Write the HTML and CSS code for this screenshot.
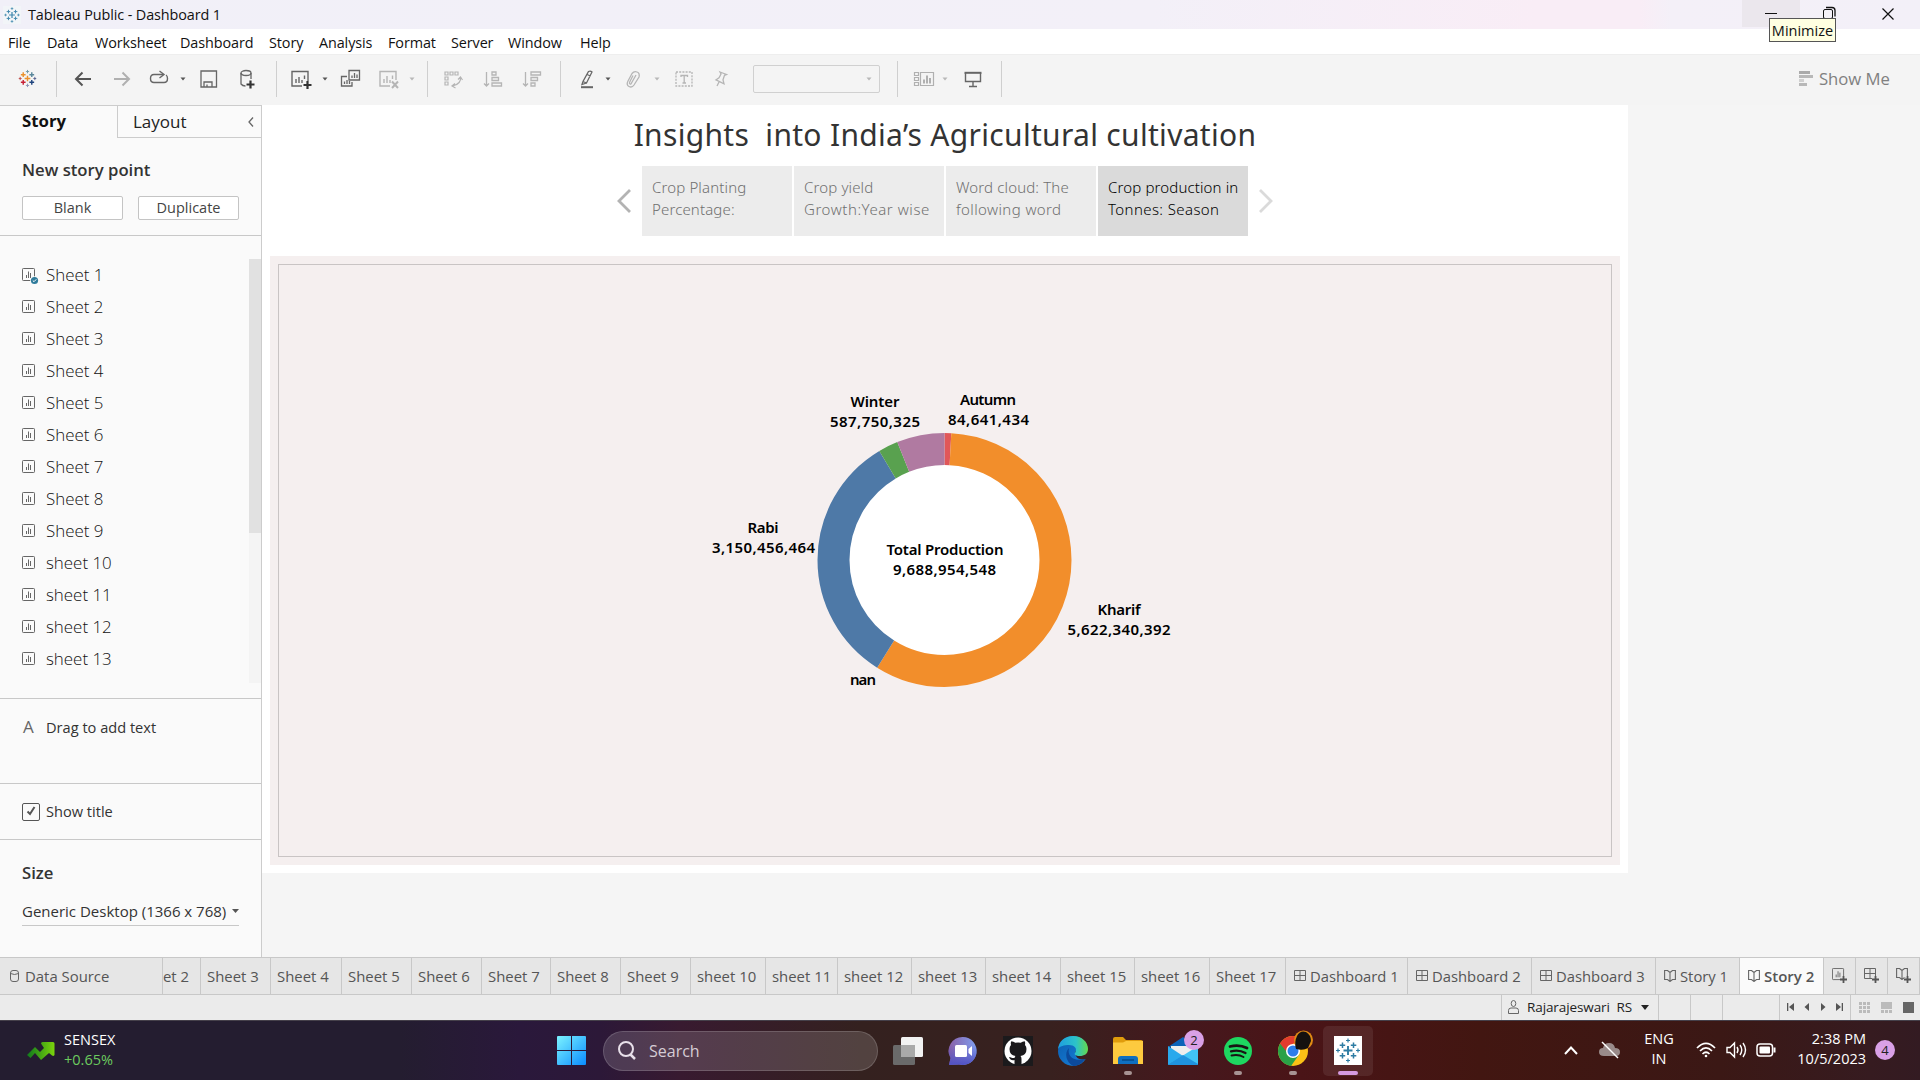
FILE: index.html
```html
<!DOCTYPE html>
<html lang="en">
<head>
<meta charset="utf-8">
<title>Tableau Public - Dashboard 1</title>
<link rel="stylesheet" href="styles.css">
</head>
<body>
<svg width="0" height="0" class="defs">
  <defs>
    <symbol id="sheet" viewBox="0 0 14 14"><rect x=".5" y=".5" width="12" height="12" rx=".8" fill="none" stroke="#666"/><path d="M4.500 10V7M6.500 10V3.500M8.500 10V5" stroke="#666"/></symbol>
    <symbol id="caret" viewBox="0 0 20 20"><path d="M7.500 8.500h5l-2.500 3z" fill="currentColor"/></symbol>
    <symbol id="sep" viewBox="0 0 20 36"><path d="M10.500 0v36" stroke="#cfcfcf"/></symbol>
    <symbol id="dash" viewBox="0 0 12 12"><path d="M.5 .5h11v10h-11zM6 .5v10M.5 5.500h11" fill="none" stroke="#666"/></symbol>
    <symbol id="book" viewBox="0 0 12 12"><path d="M.6 .5L3.500 .5 6 2.500 8.500 .5l2.900 0V9.500L8.500 9.500 6 11.500 3.500 9.500 .6 9.500zM6 2.500v9" fill="none" stroke="#666" stroke-width="1.100"/></symbol>
    <symbol id="tableau" viewBox="0 0 28 28">
      <g stroke-width="1.500" fill="none">
        <path d="M14 9.500v9M9.500 14h9" stroke-width="1.900"/><path d="M8.500 6v5.500M5.700 8.700h5.500M19.500 6v5.500M16.800 8.700h5.500M8.500 16.500V22M5.700 19.300h5.500M19.500 16.500V22M16.800 19.300h5.500"/>
        <path d="M14 2v4M12 4h4M14 22v4M12 24h4M4 12v4M2 14h4M24 12v4M22 14h4" stroke-width="1.200"/>
      </g>
    </symbol>
  </defs>
</svg>

<header class="titlebar">
  <svg class="app-icon" width="18" height="18" viewBox="0 0 28 28"><rect width="28" height="28" fill="#f2f5f8"/><use href="#tableau" stroke="#3f87ad" width="28" height="28"/></svg>
  <span class="app-name">Tableau Public - Dashboard 1</span>
  <div class="win-buttons">
    <span class="win-btn hover"><svg width="12" height="12"><path d="M0 5.500h12" stroke="#111"/></svg></span>
    <span class="win-btn"><svg width="13" height="13" fill="none" stroke="#111"><rect x=".5" y="2.500" width="9" height="9" rx="1.500"/><path d="M3 .5h6q3 0 3 3v6" stroke-width="1.300"/></svg></span>
    <span class="win-btn close"><svg width="12" height="12"><path d="M.5 .5l11 11M11.500 .5l-11 11" stroke="#111" stroke-width="1.200"/></svg></span>
  </div>
  <div class="tooltip">Minimize</div>
</header>

<nav class="menubar"><span>File</span><span>Data</span><span>Worksheet</span><span>Dashboard</span><span>Story</span><span>Analysis</span><span>Format</span><span>Server</span><span>Window</span><span>Help</span></nav>

<div class="toolbar">
  <svg class="ic logo" viewBox="0 0 20 20" stroke-width="1.500"><path d="M10 7v6M7 10h6" stroke="#eb912c"/><path d="M5.500 3.500v5M3 6h5" stroke="#eb912c"/><path d="M14.500 3.500v5M12 6h5" stroke="#59879b"/><path d="M5.500 11.500v5M3 14h5" stroke="#c72035"/><path d="M14.500 11.500v5M12 14h5" stroke="#1f447e"/><path d="M10 1v3.500M8.300 2.700h3.400" stroke="#7199a6" stroke-width="1"/><path d="M10 15.500V19M8.300 17.300h3.400" stroke="#8a93b5" stroke-width="1"/><path d="M2.300 8.300v3.400M.8 10h3" stroke="#c0504d" stroke-width="1"/><path d="M17.700 8.300v3.400M16.200 10h3" stroke="#5b6591" stroke-width="1"/></svg>
  <svg class="sep"><use href="#sep"/></svg>
  <svg class="ic" fill="none" stroke="#555" stroke-width="2"><path d="M18 10H3M9.500 3.500L3 10l6.500 6.500"/></svg>
  <svg class="ic" fill="none" stroke="#b0b0b0" stroke-width="2"><path d="M2 10h15M10.500 3.500L17 10l-6.500 6.500"/></svg>
  <svg class="ic" fill="none" stroke="#666" stroke-width="1.400"><path d="M14 5.500H5q-3.500 0-3.500 4t3.500 4h10q3.500 0 3.500-4 0-2.500-1.500-3.500"/><path d="M10.500 2l4.500 3.500-4.500 3.500" /></svg>
  <svg class="ic dark"><use href="#caret"/></svg>
  <svg class="ic" fill="none" stroke="#666" stroke-width="1.300"><path d="M2 2h15.500v16H2zM5 18v-5h8v5M8 18v-2.500"/></svg>
  <svg class="ic" fill="none" stroke="#666" stroke-width="1.300"><ellipse cx="9" cy="4" rx="5" ry="2.500"/><path d="M4 4v11q1.500 2 4.500 2M14 4v6"/><path d="M13.500 11.500v8M9.500 15.500h8" stroke="#333" stroke-width="2.200"/></svg>
  <svg class="sep"><use href="#sep"/></svg>
  <svg class="ic" fill="none" stroke="#666" stroke-width="1.400"><path d="M12 17H2V2.500h16V12M6 14v-4M9 14V8M12 14v-3M14.500 10V6.500"/><path d="M17.500 12v8M13.500 16h8" stroke="#333" stroke-width="2.200"/></svg>
  <svg class="ic dark"><use href="#caret"/></svg>
  <svg class="ic" fill="none" stroke="#666" stroke-width="1.300"><path d="M9 1.500h10.500v9.500H9zM12 9V6.500M14.500 9V4M17 9V5.500M7 7.500H1.500V17H12v-4M4.500 15v-2.500M7 15v-4M9.500 15v-3"/></svg>
  <svg class="ic" fill="none" stroke="#b5b5b5" stroke-width="1.400"><path d="M12 17H2V2.500h16V11M6 14v-4M9 14V7M12 14v-3M14.500 10V6.500"/><path d="M14 12.500l6 6.500M20 12.500L14 19" stroke-width="2"/></svg>
  <svg class="ic light"><use href="#caret"/></svg>
  <svg class="sep"><use href="#sep"/></svg>
  <svg class="ic" fill="none" stroke="#b5b5b5" stroke-width="1.200"><path d="M2 3h3v3H2zM7 3h3v3H7zM12 3h3v3h-3zM2 8h3v3H2zM2 13h3v3H2zM17.500 8q1 7-8 9M15 10.500L17.500 8l2 3M12 14.500L9 17l3.500 2"/></svg>
  <svg class="ic" fill="none" stroke="#b5b5b5" stroke-width="1.300"><path d="M3.500 3v14M1 14.500L3.500 17 6 14.500M9 3h4v3H9zM9 8.500h6.500v3H9zM9 14h9.500v3H9z"/></svg>
  <svg class="ic" fill="none" stroke="#b5b5b5" stroke-width="1.300"><path d="M3.500 3v14M1 14.500L3.500 17 6 14.500M9 3h9.500v3H9zM9 8.500h6.500v3H9zM9 14h4v3H9z"/></svg>
  <svg class="sep"><use href="#sep"/></svg>
  <svg class="ic" fill="none" stroke="#666" stroke-width="1.300"><path d="M11.500 2.500q2-1 3.500.5L9.500 14 6 12.500zM10 5.500l3.500 1.500M6 12.500l-1 3 4.500-1.500"/><path d="M4 18.200h12" stroke-width="2"/></svg>
  <svg class="ic dark"><use href="#caret"/></svg>
  <svg class="ic" fill="none" stroke="#b5b5b5" stroke-width="1.300"><path d="M5 12l4-7.500Q11 2 14 3t2 5l-5 8q-2 3-5 1.500T5 12M13 6l-4.500 8q-.5 1.500-1.500 1t-.3-2L10 6.500"/></svg>
  <svg class="ic light"><use href="#caret"/></svg>
  <svg class="ic" fill="none" stroke="#b5b5b5" stroke-width="1.300"><rect x="2" y="3" width="16" height="14" stroke-dasharray="2 1.200"/><path d="M7 8V6.500h6.500V8M10.200 6.500v7.500M8.500 14h3.500"/></svg>
  <svg class="ic" fill="none" stroke="#b5b5b5" stroke-width="1.300"><path d="M9 3l6.500 2.500-2 .8-1.500 4.500 1 4-8-4 3-2L10 5zM8 13l-2 4"/></svg>
  <span class="combo"><svg class="ic light"><use href="#caret"/></svg></span>
  <svg class="sep"><use href="#sep"/></svg>
  <svg class="ic" fill="none" stroke="#b0b0b0" stroke-width="1.200"><path d="M.5 3.500h4v3h-4zM.5 8.500h4v3h-4zM.5 13.500h4v3h-4zM6.500 3.500h13v13h-13z"/><path d="M10 14.500v-4M13 14.500v-8M16 14.500V9" stroke-width="2"/></svg>
  <svg class="ic light"><use href="#caret"/></svg>
  <svg class="ic" fill="none" stroke="#666" stroke-width="1.400"><path d="M2.500 4v8.500h15V4M10 12.500V17M6 17.500h8"/><path d="M1.500 3.800h17" stroke-width="2"/></svg>
  <svg class="sep"><use href="#sep"/></svg>
  <div class="showme"><svg width="14" height="16"><path d="M0 1.500h11" stroke="#aaa" stroke-width="3"/><path d="M0 5.500h14M0 13.500h8" stroke="#b8b8b8" stroke-width="3"/><path d="M0 9.500h5" stroke="#d0d0d0" stroke-width="3"/></svg><span>Show Me</span></div>
</div>

<main class="workspace">
  <aside class="sidebar">
    <div class="side-tabs"><div class="side-tab active">Story</div><div class="side-tab other"><span>Layout</span><svg width="6" height="10" fill="none" stroke="#666" stroke-width="1.300"><path d="M5 .5L1 5l4 4.500"/></svg></div></div>
    <section class="new-point"><h2>New story point</h2><div class="buttons"><span class="button">Blank</span><span class="button">Duplicate</span></div></section>
    <section class="sheets">
      <ul>
        <li><svg class="si" viewBox="0 0 16 14"><use href="#sheet" width="14" height="14"/><circle cx="12.500" cy="12.500" r="4.300" fill="#fafafa"/><circle cx="12.500" cy="12.500" r="3.600" fill="#2f7b9b"/><path d="M10.800 12.500l1.200 1.200 2.300-2.400" fill="none" stroke="#fff"/></svg>Sheet 1</li>
        <li><svg class="si"><use href="#sheet" width="14" height="14"/></svg>Sheet 2</li>
        <li><svg class="si"><use href="#sheet" width="14" height="14"/></svg>Sheet 3</li>
        <li><svg class="si"><use href="#sheet" width="14" height="14"/></svg>Sheet 4</li>
        <li><svg class="si"><use href="#sheet" width="14" height="14"/></svg>Sheet 5</li>
        <li><svg class="si"><use href="#sheet" width="14" height="14"/></svg>Sheet 6</li>
        <li><svg class="si"><use href="#sheet" width="14" height="14"/></svg>Sheet 7</li>
        <li><svg class="si"><use href="#sheet" width="14" height="14"/></svg>Sheet 8</li>
        <li><svg class="si"><use href="#sheet" width="14" height="14"/></svg>Sheet 9</li>
        <li><svg class="si"><use href="#sheet" width="14" height="14"/></svg>sheet 10</li>
        <li><svg class="si"><use href="#sheet" width="14" height="14"/></svg>sheet 11</li>
        <li><svg class="si"><use href="#sheet" width="14" height="14"/></svg>sheet 12</li>
        <li><svg class="si"><use href="#sheet" width="14" height="14"/></svg>sheet 13</li>
      </ul>
      <div class="scroll"><div class="thumb"></div></div>
    </section>
    <section class="drag"><b>A</b><span>Drag to add text</span></section>
    <section class="show-title"><span class="check"><svg width="10" height="10" fill="none" stroke="#555" stroke-width="2"><path d="M1.500 4.500L4 7l4.500-7"/></svg></span><span class="check-label">Show title</span></section>
    <section class="size"><h2>Size</h2><div class="select"><span>Generic Desktop (1366 x 768)</span><svg width="7" height="4"><path d="M0 0h7L3.500 4z" fill="#555"/></svg></div></section>
  </aside>

  <div class="canvas">
    <article class="story">
      <h1>Insights&nbsp; into India’s Agricultural cultivation</h1>
      <div class="points">
        <svg class="arrow" width="14" height="24" fill="none" stroke="#b3b3b3" stroke-width="2.800"><path d="M13 1L2 12l11 11"/></svg>
        <div class="point">Crop Planting<br>Percentage:</div>
        <div class="point">Crop yield<br><span class="widest">Growth:Year wise</span></div>
        <div class="point">Word cloud: The<br><span class="wide">following word</span></div>
        <div class="point current">Crop production in<br><span class="wide">Tonnes: Season</span></div>
        <svg class="arrow" width="14" height="24" fill="none" stroke="#dadada" stroke-width="2.800"><path d="M1 1l11 11L1 23"/></svg>
      </div>
      <div class="dashboard"><div class="frame">
        <svg class="chart" viewBox="695 380 500 330" width="500" height="330">
          <circle cx="944.500" cy="560" r="96" fill="#fff"/>
          <g fill="none" stroke-width="32" transform="rotate(-90 944.5 560)">
            <circle cx="944.500" cy="560" r="111" pathLength="100" stroke="#e15759" stroke-dasharray="0.874 99.126"/>
            <circle cx="944.500" cy="560" r="111" pathLength="100" stroke="#f28e2b" stroke-dasharray="58.028 41.972" stroke-dashoffset="-0.874"/>
            <circle cx="944.500" cy="560" r="111" pathLength="100" stroke="#4e79a7" stroke-dasharray="32.516 67.484" stroke-dashoffset="-58.902"/>
            <circle cx="944.500" cy="560" r="111" pathLength="100" stroke="#59a14f" stroke-dasharray="2.516 97.484" stroke-dashoffset="-91.418"/>
            <circle cx="944.500" cy="560" r="111" pathLength="100" stroke="#b07aa1" stroke-dasharray="6.066 93.934" stroke-dashoffset="-93.934"/>
          </g>
          <g class="labels" text-anchor="middle">
            <text x="875" y="407" textLength="49">Winter</text><text x="875" y="427" textLength="90">587,750,325</text>
            <text x="988" y="405" textLength="56">Autumn</text><text x="988.500" y="425" textLength="81">84,641,434</text>
            <text x="763" y="533" textLength="31">Rabi</text><text x="763.500" y="553" textLength="103">3,150,456,464</text>
            <text x="1119" y="615" textLength="43">Kharif</text><text x="1119" y="635" textLength="103">5,622,340,392</text>
            <text x="863" y="685" textLength="26">nan</text>
            <text x="945" y="555" textLength="117">Total Production</text><text x="944.500" y="575" textLength="103">9,688,954,548</text>
          </g>
        </svg>
      </div></div>
    </article>
  </div>
</main>

<nav class="tabs">
  <span class="tab source"><svg width="9" height="13" fill="none" stroke="#666"><rect x=".5" y=".5" width="8" height="11" rx="2.500"/><path d="M.5 3.500q4 2 8 0"/></svg>Data Source</span>
  <span class="tab cut">et 2</span><span class="tab">Sheet 3</span><span class="tab">Sheet 4</span><span class="tab">Sheet 5</span><span class="tab">Sheet 6</span><span class="tab">Sheet 7</span><span class="tab">Sheet 8</span><span class="tab">Sheet 9</span><span class="tab">sheet 10</span><span class="tab">sheet 11</span><span class="tab">sheet 12</span><span class="tab">sheet 13</span><span class="tab">sheet 14</span><span class="tab">sheet 15</span><span class="tab">sheet 16</span><span class="tab">Sheet 17</span>
  <span class="tab icon"><svg width="12" height="12"><use href="#dash"/></svg>Dashboard 1</span><span class="tab icon"><svg width="12" height="12"><use href="#dash"/></svg>Dashboard 2</span><span class="tab icon"><svg width="12" height="12"><use href="#dash"/></svg>Dashboard 3</span>
  <span class="tab icon"><svg width="12" height="12"><use href="#book"/></svg>Story 1</span><span class="tab icon selected"><svg width="12" height="12"><use href="#book"/></svg>Story 2</span>
  <span class="tab add"><svg width="16" height="16"><use href="#sheet" width="13" height="13"/><path d="M8.500 11.500h7M12 8v7" stroke="#e6e6e6" stroke-width="4"/><path d="M8 11.500h7M11.500 8v7" stroke="#555" stroke-width="1.800"/></svg></span>
  <span class="tab add"><svg width="16" height="16"><use href="#dash" width="12" height="12"/><path d="M8 11.500h7M11.500 8v7" stroke="#e6e6e6" stroke-width="4"/><path d="M8 11.500h7M11.500 8v7" stroke="#555" stroke-width="1.800"/></svg></span>
  <span class="tab add"><svg width="16" height="16"><use href="#book" width="12" height="12"/><path d="M8 11.500h7M11.500 8v7" stroke="#e6e6e6" stroke-width="4"/><path d="M8 11.500h7M11.500 8v7" stroke="#555" stroke-width="1.800"/></svg></span>
</nav>

<div class="status">
  <span></span>
  <span class="user"><svg width="11" height="15" fill="none" stroke="#666"><ellipse cx="5.500" cy="3.500" rx="2.300" ry="3"/><path d="M.5 13.500v-3q0-2.500 2.500-2.500h5q2.500 0 2.500 2.500v3z"/></svg><em>Rajarajeswari&nbsp; RS</em><svg width="8" height="5"><path d="M0 0h8L4 5z" fill="#222"/></svg></span>
  <span></span><span></span><span></span>
  <span class="steps">
    <svg width="8" height="8"><path d="M7 0v8L2 4zM0 0h1.300v8H0z"/></svg><svg width="8" height="8"><path d="M6 0v8L1.500 4z"/></svg><svg width="8" height="8"><path d="M2 0v8l4.500-4z"/></svg><svg width="8" height="8"><path d="M1 0v8l5-4zM6.700 0H8v8H6.700z"/></svg>
  </span>
  <span class="views">
    <svg width="11" height="11" fill="#bbb"><path d="M0 0h3v3H0zM4 0h3v3H4zM8 0h3v3H8zM0 4h3v3H0zM4 4h3v3H4zM8 4h3v3H8zM0 8h3v3H0zM4 8h3v3H4zM8 8h3v3H8z"/></svg>
    <svg width="11" height="11" fill="#bbb"><path d="M0 0h11v7H0zM0 8h3v3H0zM4 8h3v3H4zM8 8h3v3H8z"/></svg>
    <svg width="11" height="11"><path d="M0 0h11v11H0z" fill="#666"/></svg>
  </span>
</div>

<footer class="taskbar">
  <div class="widget"><svg width="28" height="18" viewBox="0 0 28 18"><defs><linearGradient id="gr"><stop offset="0" stop-color="#0f7a1c"/><stop offset="1" stop-color="#7bd40c"/></linearGradient></defs><path d="M0 13L8 5l5 5 4-4-3-4.500q0-1.500 1.500-1.500H26q1.500 0 1.500 1.500V13q-1 1.500-2.500.5L22 11l-8 7-6-7-4.500 5z" fill="url(#gr)"/></svg><p><span>SENSEX</span><span class="up">+0.65%</span></p></div>
  <div class="apps">
    <svg class="win" width="29" height="29"><defs><linearGradient id="wg" x2="1" y2="1"><stop offset="0" stop-color="#7cf3ff"/><stop offset="1" stop-color="#0a8cff"/></linearGradient></defs><path fill="url(#wg)" d="M0 1q0-1 1-1h13v14H0zM15 0h13q1 0 1 1v13H15zM0 15h14v14H1q-1 0-1-1zM15 15h14v13q0 1-1 1H15z"/></svg>
    <div class="search"><svg width="18" height="19" fill="none" stroke="#e8e0ea" stroke-width="2"><circle cx="8" cy="8" r="7"/><path d="M12.500 13.500l4.500 4.500" stroke-width="2.500"/></svg><span>Search</span></div>
    <div class="app"><svg width="30" height="28"><rect x="8" width="22" height="20" rx="1.500" fill="#f2f2f2"/><rect y="8" width="22" height="20" rx="1.500" fill="#6a6a6a"/><path d="M8 8h14v12H8z" fill="#a9a9a9"/></svg></div>
    <div class="app"><svg width="30" height="30"><defs><linearGradient id="tg" x2="1" y2="0"><stop offset="0" stop-color="#8a5fa6"/><stop offset="1" stop-color="#7f9ff0"/></linearGradient><linearGradient id="tg2" x2="0" y2="1"><stop offset=".3" stop-color="#5454c5" stop-opacity="0"/><stop offset="1" stop-color="#4f52c4"/></linearGradient></defs><path d="M15 1a14 14 0 1 1-4 27.500L1 29l1.500-7A14 14 0 0 1 15 1z" fill="url(#tg)"/><path d="M15 1a14 14 0 1 1-4 27.500L1 29l1.500-7A14 14 0 0 1 15 1z" fill="url(#tg2)"/><rect x="7" y="9" width="12" height="12" rx="1.500" fill="#fff"/><path d="M20.500 13l3.500-3v10l-3.500-3z" fill="#fff"/></svg></div>
    <div class="app"><svg width="30" height="30"><rect width="30" height="30" fill="#1b1a1c"/><circle cx="15" cy="15" r="13.500" fill="#fff"/><path d="M11.500 29v-5q-4 1-5.500-3c2 0 2.500 1.500 5.500 1q.3-1.500 1-2-6-.8-6-7 0-2.500 1.500-4-.5-2.500.3-3.800 2.200.2 4 1.600 2.700-.7 5.400 0 1.800-1.400 4-1.600.8 1.300.3 3.800 1.500 1.500 1.500 4 0 6.200-6 7 1 1 1 3V29z" fill="#1b1a1c"/></svg></div>
    <div class="app"><svg width="30" height="30"><defs><linearGradient id="eg"><stop offset="0" stop-color="#1e9de0"/><stop offset=".6" stop-color="#2cc3c9"/><stop offset="1" stop-color="#64d84c"/></linearGradient><linearGradient id="eb" y2="1"><stop offset="0" stop-color="#0b5cae"/><stop offset="1" stop-color="#1782dc"/></linearGradient></defs><circle cx="15" cy="15" r="15" fill="url(#eb)"/><path d="M30 13v9l-2 1c-3 1-8 1-10-3l-1-3 2-5z" fill="#3c1f20"/><path d="M0 13C1 5 7 0 15 0c9 0 15 6 15 13 0 5-4 7-8 7-5 0-6-2-5-3 3-5-1-8-6-8S2 10 0 13z" fill="url(#eg)"/><path d="M11 12c-2 8 4 14 16 11-3 4.500-7 7-12 7-7-4-9-13-4-18z" fill="#0c4a9c"/></svg></div>
    <div class="app"><svg width="30" height="28"><path d="M0 2q0-2 2-2h8l3 3h15q2 0 2 2v4H0z" fill="#e09c0c"/><path d="M0 5.500h10l3-1.500h17v23H0z" fill="#fdca3f"/><path d="M5 27v-5q0-3 3-3h14q3 0 3 3v5z" fill="#0f6fc0"/><path d="M9 23h12" stroke="#064a88" stroke-width="1.500"/></svg><i></i></div>
    <div class="app"><svg width="30" height="28"><path d="M0 10L15 0l15 10z" fill="#0b62b8"/><path d="M3 9h24v12H3z" fill="#eee"/><path d="M0 9l15 10L0 28z" fill="#2aa9ec"/><path d="M30 9v19H0z" fill="#41c4f6"/><path d="M30 28V27L15 18 0 28z" fill="#1f93df"/></svg><b class="badge">2</b></div>
    <div class="app"><svg width="30" height="30" fill="none" stroke="#191414" stroke-linecap="round"><circle cx="15" cy="15" r="14" fill="#1ed760" stroke="none"/><path d="M7 10.500q9-2.500 17 1.500" stroke-width="2.800"/><path d="M8 15.300q8-2 14.500 1.700" stroke-width="2.300"/><path d="M8.500 19.500q7-1.500 12 1.500" stroke-width="1.900"/></svg><i></i></div>
    <div class="app"><svg width="30" height="30"><circle cx="15" cy="15" r="15" fill="#fbc116"/><path d="M15 15L2 7.500A15 15 0 0 0 13 29.900L21.500 18z" fill="#2aa147"/><path d="M15 15h-7L2 7.500A15 15 0 0 1 28 7.500H15z" fill="#e33b2e"/><circle cx="15" cy="15" r="7" fill="#fff"/><circle cx="15" cy="15" r="5.500" fill="#2b7de9"/></svg><svg class="avatar" width="19" height="20"><circle cx="9.500" cy="10" r="9.500" fill="#e08a13"/><path d="M2 19Q0 12 3 6t9-4q5 3 5 9l-3 7q-5 3-12 1z" fill="#15110f"/></svg><i></i></div>
    <div class="app active"><svg width="28" height="29"><rect width="28" height="29" fill="#fff"/><use href="#tableau" stroke="#2e7ca3" width="28" height="29"/></svg><i></i></div>
  </div>
  <div class="tray">
    <svg width="14" height="9" fill="none" stroke="#fff" stroke-width="2"><path d="M1 8l6-6.500L13 8"/></svg>
    <svg class="cloud" width="22" height="18"><path d="M5 15q-5 0-5-4t4-4q1-5 6-5 5 0 6 5 5 0 5 4t-4 4z" fill="#998a89"/><path d="M3 1l16 16" stroke="#fff" stroke-width="1.500"/></svg>
    <p class="lang"><span>ENG</span><span>IN</span></p>
    <svg class="wifi" width="20" height="16" fill="none" stroke="#fff" stroke-width="1.700"><path d="M1 6q9-9 18 0M4 9q6-6 12 0M6.500 12q3.500-3.500 7 0"/><circle cx="10" cy="14" r="1.300" fill="#fff" stroke="none"/></svg>
    <svg class="sound" width="21" height="16" fill="none" stroke="#fff" stroke-width="1.400"><path d="M1 5.500h3L8.500 1v14L4 10.500H1zM11 5q2 3 0 6M14 3q3.500 5 0 10M17 1q5 7 0 14"/></svg>
    <svg class="battery" width="20" height="14" fill="none" stroke="#fff" stroke-width="1.500"><rect x="1" y="1" width="15.500" height="12" rx="3"/><rect x="3.500" y="3.500" width="10.500" height="7" rx="1" fill="#fff" stroke="none"/><path d="M18.500 4.500v5" stroke-width="2"/></svg>
    <p class="clock"><span>2:38 PM</span><span>10/5/2023</span></p>
    <b class="count">4</b>
  </div>
</footer>
</body>
</html>
```
FILE: styles.css
```css
* { box-sizing: border-box; }
body {
  margin: 0; width: 1920px; height: 1080px; overflow: hidden;
  display: grid; grid-template-rows: 29px 25px 51px 852px 38px 25px 60px;
  font-family: "Open Sans", "Noto Sans", sans-serif; font-size: 15px; color: #333; background: #f5f5f5;
}
h1, h2, p, ul { margin: 0; padding: 0; font-weight: 400; }
svg { display: block; flex: none; overflow: visible; }
.defs { position: absolute; }

.titlebar {
  position: relative; display: flex; align-items: center; padding-left: 3px;
  background: linear-gradient(90deg, #f1f0f8 0, #f3f0f8 60%, #f9edf6 80%, #f9edf6 85.400%, #f4f0f8 87%, #f3f0f8 100%);
}
.app-name { margin-left: 7px; color: #111; font-size: 14.400px; letter-spacing: -.1px; }
.win-buttons { display: flex; margin-left: auto; padding-right: 2px; align-self: flex-start; }
.win-btn { width: 58px; height: 27px; display: grid; place-items: center; }
.win-btn.hover { background: #ebe7ed; }
.win-btn.close { width: 60px; }
.tooltip {
  position: absolute; left: 1769px; top: 18px; width: 67px; height: 24px; border: 1px solid #555;
  background: #ffffe1; color: #111; text-align: center; line-height: 23px; font-size: 14.500px; z-index: 2;
}

.menubar { display: grid; grid-template-columns: 39px 48px 85px 89px 50px 69px 63px 57px 72px auto; padding-left: 8px; background: #fff; color: #111; line-height: 27px; font-size: 14.400px; letter-spacing: -.1px; }

.toolbar {
  display: grid; align-items: center; padding: 0 30px 3px 18px; background: #f4f4f4; border-top: 1px solid #eee;
  grid-template-columns: 28px 27px 39px 37px 24px 26px 38px 29px 24px 25px 25px 38px 24px 15px 26px 40px 39px 28px 27px 21px 25px 24px 27px 37px 42px 134px 27px 21px 28px 28px 20px 1fr;
}
.ic { width: 20px; height: 20px; }
.ic.logo { width: 19px; height: 19px; }
.sep { width: 20px; height: 36px; }
.dark { color: #555; }
.light { color: #b8b8b8; }
.combo { width: 127px; height: 28px; border: 1px solid #d0d0d0; border-radius: 2px; display: flex; align-items: center; justify-content: flex-end; }
.showme { grid-column: -2; justify-self: end; display: flex; align-items: center; gap: 6px; color: #808080; font-size: 16.700px; }

.workspace { display: grid; grid-template-columns: 262px 1fr; }
.sidebar { display: grid; grid-template-rows: 32px 98px 463px 85px 56px 117px; background: #fafafa; border-right: 1px solid #ccc; border-top: 1px solid #ccc; }
.sidebar section { border-bottom: 1px solid #c8c8c8; }
.sidebar h2 { font-size: 16.700px; font-weight: 600; line-height: 22px; }
.side-tabs { display: grid; grid-template-columns: 117px 1fr; }
.side-tab { line-height: 30px; font-size: 17px; color: #222; }
.side-tab.active { padding-left: 22px; font-weight: 700; color: #111; font-size: 16.800px; }
.side-tab.other { border-left: 1px solid #ccc; border-bottom: 1px solid #ccc; padding: 0 7px 0 15px; display: flex; align-items: center; justify-content: space-between; }
.new-point { padding: 21px 0 0 22px; }
.buttons { display: flex; gap: 15px; margin-top: 15px; }
.button { width: 101px; height: 24px; border: 1px solid #c4c4c4; border-radius: 2px; background: #fff; text-align: center; line-height: 21px; font-size: 14.500px; color: #444; }
.sheets { display: grid; grid-template-columns: 1fr 12px; padding-top: 23px; }
.sheets ul { list-style: none; }
.sheets li { height: 32px; display: flex; align-items: center; padding: 0 0 2px 22px; gap: 8px; font-size: 16.900px; font-weight: 300; color: #111; }
.si { width: 16px; height: 14px; margin-top: 2px; }
.scroll { height: 424px; background: #f4f4f4; }
.thumb { height: 274px; background: #e1e1e1; }
.drag { display: flex; padding: 16px 0 0 23px; line-height: 24px; }
.drag b { width: 23px; font-weight: 400; font-size: 17px; color: #666; }
.drag, .show-title { font-size: 14.600px; }
.show-title { display: flex; align-items: center; padding-left: 22px; gap: 6px; }
.check-label { padding-bottom: 2px; }
.check { width: 18px; height: 18px; border: 1px solid #555; border-radius: 2px; display: grid; place-items: center; }
.sidebar .size { border: 0; padding: 22px 0 0 22px; }
.select { display: flex; align-items: center; justify-content: space-between; width: 217px; height: 28px; margin-top: 14px; padding-bottom: 2px; border-bottom: 1px solid #c8c8c8; font-size: 15px; }

.canvas { background: #f5f5f5; }
.story { width: 1366px; height: 768px; background: #fff; display: flex; flex-direction: column; align-items: center; }
.story h1 { height: 61px; line-height: 60px; font-family: "Noto Sans", sans-serif; font-size: 30px; letter-spacing: .31px; white-space: nowrap; color: #333; }
.points { display: flex; gap: 2px; height: 70px; align-items: center; }
.arrow:first-child { margin-right: 9px; }
.arrow:last-child { margin-left: 9px; }
.point { width: 150px; height: 70px; background: #ececec; color: #707070; padding: 10px 0 0 10px; line-height: 22px; font-family: "Noto Sans", sans-serif; font-weight: 300; font-size: 15px; letter-spacing: .14px; white-space: nowrap; }
.point .wide { letter-spacing: .4px; }
.point .widest { letter-spacing: .55px; }
.point.current { background: #dadada; color: #000; }
.dashboard { width: 1350px; height: 609px; margin-top: 20px; background: #f5efef; padding: 8px; }
.frame { height: 593px; border: 1px solid #c9c4c4; display: flex; justify-content: center; padding-top: 115px; }
.labels { font: 600 15px "Noto Sans", sans-serif; fill: #000; }

.tabs {
  display: grid; border-top: 1px solid #c8c8c8; border-bottom: 1px solid #c8c8c8; background: #e6e6e6; color: #555;
  grid-template-columns: 163px 38px 70px 71px 70px 70px 69px 70px 70px 75px 72px 74px 74px 75px 74px 75px 76px 122px 124px 124px 84px 84px 32px 32px 32px;
}
.tab { display: flex; align-items: center; padding-left: 6px; gap: 5px; border-right: 1px solid #c8c8c8; white-space: nowrap; font-size: 14.900px; overflow: hidden; }
.tab.icon { padding-left: 8px; gap: 4px; font-size: 14.800px; }
.tab.source { padding-left: 10px; gap: 6px; }
.tab.cut { padding-left: 0; }
.tab.selected { background: #fafafa; font-weight: 600; font-size: 15px; }
.tab.add { padding-left: 8px; }

.status { display: grid; grid-template-columns: 1502px 157px 32px 32px 57px 71px 1fr; background: #ebebeb; }
.status > span { border-right: 1px solid #c8c8c8; display: flex; align-items: center; padding-bottom: 1px; }
.status > span:last-child { border: 0; }
.status .user { padding-left: 6px; color: #222; font-size: 13.500px; }
.user em { font-style: normal; margin: 0 9px 0 8px; letter-spacing: -.1px; }
.status .steps { gap: 8px; padding-left: 7px; fill: #555; }
.status .views { gap: 11px; padding-left: 8px; }

.taskbar {
  position: relative; display: grid; grid-template-columns: 557px 900px 1fr; align-items: center; color: #fff;
  border-top: 1px solid #45404a;
  background: linear-gradient(90deg, #241d30 0, #241d30 400px, #2a183b 520px, #2c1838 600px, #381a30 680px, #34211f 860px, #38211f 1050px, #45181d 1190px, #4a1417 1300px, #421611 1480px, #3b1815 1720px, #361b20 1870px, #331b22 1920px);
}
.taskbar p { display: flex; flex-direction: column; line-height: 20px; font-size: 14.500px; padding-bottom: 2px; }
.widget { display: flex; align-items: center; gap: 9px; padding-left: 27px; }
.widget .up { color: #6ccb5f; }
.apps { display: flex; align-items: center; height: 59px; }
.search { width: 275px; height: 40px; margin: 0 5px 0 17px; border-radius: 20px; border: 1px solid #ffffff28; background: #ffffff26; display: flex; align-items: center; gap: 13px; padding-left: 14px; color: #d5ccd5; font-size: 16px; }
.app { position: relative; width: 50px; height: 50px; margin-right: 5px; display: grid; place-items: center; border-radius: 5px; }
.app.active { background: #ffffff14; }
.app i { position: absolute; bottom: 1px; left: 21px; width: 8px; height: 4px; border-radius: 2px; background: #a79393; }
.app.active i { left: 15px; width: 20px; background: #d69ae0; }
.badge, .count { width: 20px; height: 20px; border-radius: 50%; background: #d9a0e6; color: #222; font-size: 13px; line-height: 20px; text-align: center; font-weight: 400; }
.badge { position: absolute; left: 26px; top: 4px; }
.avatar { position: absolute; left: 26px; top: 4px; }
.tray { display: flex; align-items: center; padding: 0 0 1px 107px; }
.cloud { margin-left: 21px; }
.lang { width: 40px; margin-left: 18px; text-align: center; }
.wifi { margin-left: 17px; }
.sound { margin-left: 10px; }
.battery { margin-left: 9px; }
.clock { width: 80px; margin-left: 10px; text-align: right; }
.count { margin-left: 9px; }
```
